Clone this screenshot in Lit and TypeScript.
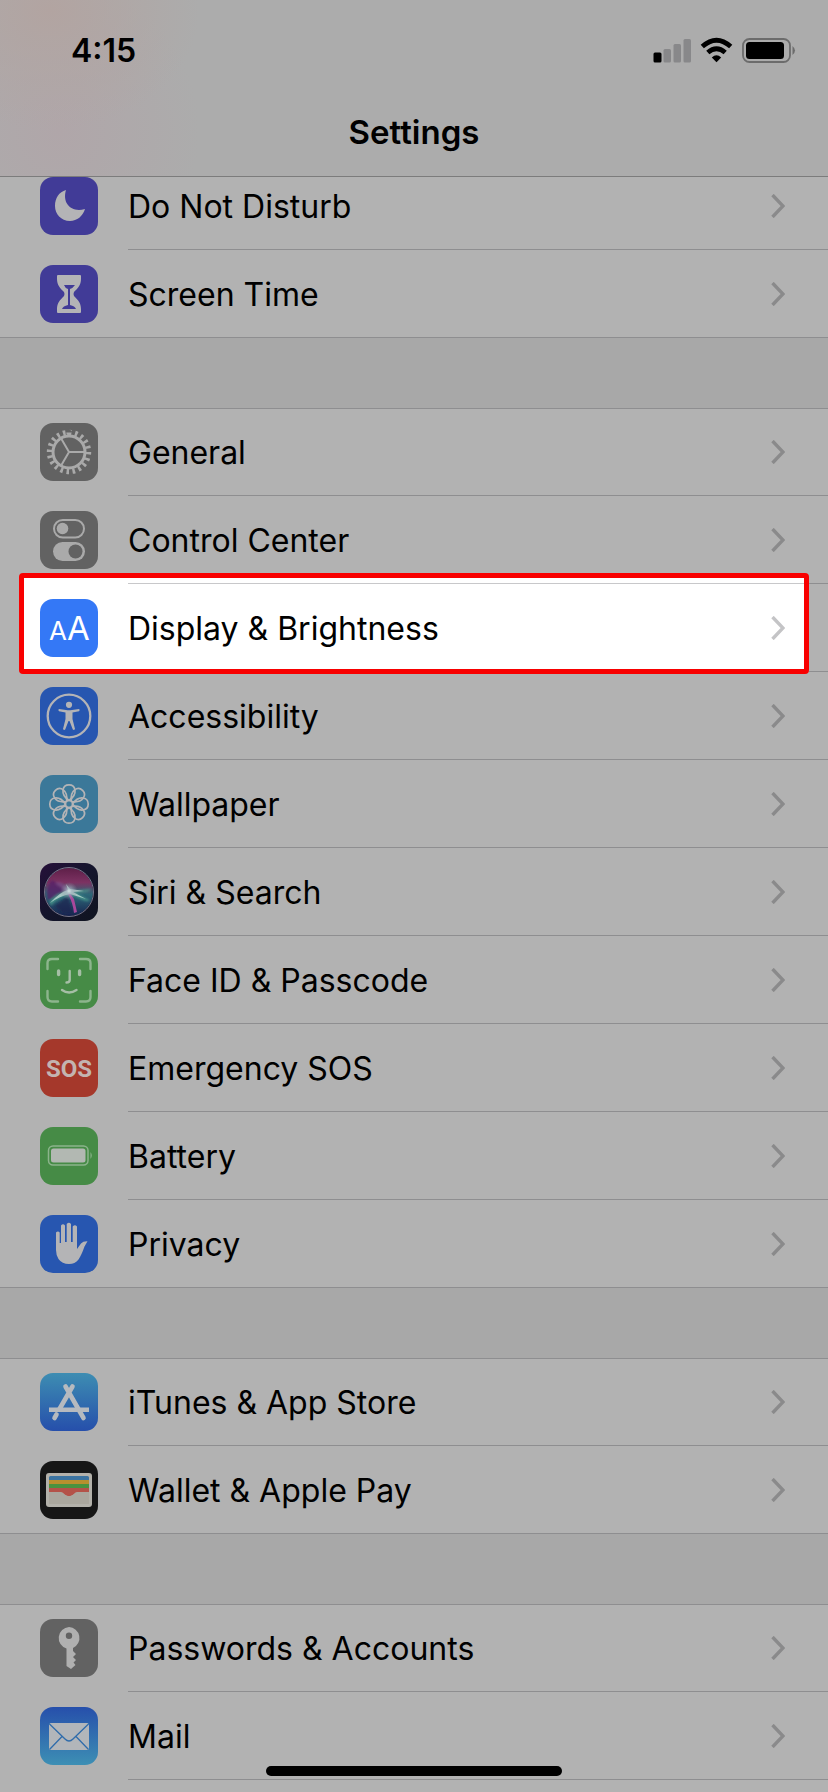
import { LitElement, html, svg, css, nothing, SVGTemplateResult } from "lit";
import { customElement, property } from "lit/decorators.js";
import { classMap } from "lit/directives/class-map.js";

interface Row {
  icon: string;
  label: string;
  highlighted?: boolean;
}

const groups: Row[][] = [
  [
    { icon: "moon", label: "Do Not Disturb" },
    { icon: "hourglass", label: "Screen Time" },
  ],
  [
    { icon: "gear", label: "General" },
    { icon: "toggles", label: "Control Center" },
    { icon: "display", label: "Display & Brightness", highlighted: true },
    { icon: "accessibility", label: "Accessibility" },
    { icon: "wallpaper", label: "Wallpaper" },
    { icon: "siri", label: "Siri & Search" },
    { icon: "face", label: "Face ID & Passcode" },
    { icon: "sos", label: "Emergency SOS" },
    { icon: "battery", label: "Battery" },
    { icon: "hand", label: "Privacy" },
  ],
  [
    { icon: "store", label: "iTunes & App Store" },
    { icon: "wallet", label: "Wallet & Apple Pay" },
  ],
  [
    { icon: "key", label: "Passwords & Accounts" },
    { icon: "mail", label: "Mail" },
  ],
];

const LIGHT = "#b4b4b6";
const BLUE = "#2756b0";
const PURPLE = "#413b97";
const eight = [0, 45, 90, 135, 180, 225, 270, 315];

const glyphs: Record<string, SVGTemplateResult> = {
  moon: svg`
    <rect width="58" height="58" fill=${PURPLE} />
    <path fill=${LIGHT} d="M26 13C22 26 31 36 45 32C43 39 37 44 30 44C21 44 15 37 15 29C15 21 19 15 26 13Z" />`,
  hourglass: svg`
    <rect width="58" height="58" fill=${PURPLE} />
    <path fill=${LIGHT} d="M18 10H40Q41 10 41 11V14C41 20 38 23 34 27Q33 29 34 31C38 35 41 38 41 44V47Q41 48 40 48H18Q17 48 17 47V44C17 38 20 35 24 31Q25 29 24 27C20 23 17 20 17 14V11Q17 10 18 10Z" />
    <path fill=${PURPLE} d="M24 20H35Q33 23 30 24V40Q35 41 36 44H22Q23 41 28 40V24Q25 23 24 20Z" />`,
  gear: svg`
    <rect width="58" height="58" fill="#626262" />
    <g fill="none" stroke="#aaaaaa">
      <circle cx="29" cy="29" r="16" stroke-width="3" />
      <circle cx="29" cy="29" r="19.5" stroke-width="5.4" pathLength="20" stroke-dasharray=".42 .58" />
      <path stroke-width="2" d="M29 29H45M29 29L21 15.200M29 29L21 42.800" />
    </g>`,
  toggles: svg`
    <rect width="58" height="58" fill="#626262" />
    <rect x="14" y="9" width="30" height="17.500" rx="8.750" fill="none" stroke="#aaaaaa" stroke-width="2" />
    <circle cx="22.500" cy="17.500" r="5.800" fill="#aaaaaa" />
    <rect x="13" y="31" width="32" height="19" rx="9.500" fill="#aaaaaa" />
    <circle cx="35.500" cy="40.500" r="7" fill="#626262" />`,
  display: svg`
    <rect width="58" height="58" fill="#3478f6" />
    <text class="glyph" x="9" y="41" font-size="26" fill="#fff">A</text>
    <text class="glyph" x="27" y="41" font-size="33" fill="#fff">A</text>`,
  accessibility: svg`
    <rect width="58" height="58" fill=${BLUE} />
    <circle cx="29" cy="29" r="21.300" fill="none" stroke=${LIGHT} stroke-width="2.300" />
    <circle cx="29" cy="17.800" r="3.100" fill=${LIGHT} />
    <path fill=${LIGHT} d="M19 22L26 23Q29 23.500 32 23L39 22Q40.500 23 39 24.300L32.500 25.500V32L35 42Q34 43.500 32.800 42.500L29.500 34H28.500L25.200 42.500Q24 43.500 23 42L25.500 32V25.500L19 24.300Q17.500 23 19 22Z" />`,
  wallpaper: svg`
    <rect width="58" height="58" fill="#3b7899" />
    <g fill="none" stroke=${LIGHT} stroke-width="1.700">
      ${eight.map(
        (a) => svg`<path d="M29 25.500C24 22 22.500 19 23 15C23.500 11.500 26 9.800 29 9.800S34.500 11.500 35 15C35.500 19 34 22 29 25.500Z" transform="rotate(${a} 29 29)" />`
      )}
      <circle cx="29" cy="29" r="3.600" />
    </g>`,
  siri: svg`
    <defs>
      <linearGradient id="siri-back" x1="0" y1="0" x2="1" y2="1">
        <stop offset="0" stop-color="#26103a" /><stop offset=".5" stop-color="#14152c" /><stop offset="1" stop-color="#10141f" />
      </linearGradient>
      <linearGradient id="siri-orb" x1="0" y1="0" x2="0" y2="1">
        <stop offset="0" stop-color="#5e1f48" /><stop offset=".3" stop-color="#7c3262" />
        <stop offset=".55" stop-color="#2d6878" /><stop offset="1" stop-color="#182450" />
      </linearGradient>
      <radialGradient id="siri-core"><stop offset="0" stop-color="#d8e4e4" /><stop offset=".3" stop-color="#a9b8c4" stop-opacity=".7" /><stop offset="1" stop-color="#888899" stop-opacity="0" /></radialGradient>
      <filter id="siri-soft" x="-20%" y="-20%" width="140%" height="140%"><feGaussianBlur stdDeviation="1" /></filter>
    </defs>
    <rect width="58" height="58" fill="url(#siri-back)" />
    <circle cx="29" cy="29" r="24" fill="url(#siri-orb)" />
    <g filter="url(#siri-soft)">
      <path fill="#552268" opacity=".8" d="M29 28C20 25 14 14 10 19Q5 29 8 37Q18 34 29 28Z" />
      <path fill="#7a4a86" opacity=".7" d="M29 27Q21 16 15 20Q19 25 29 28Z" />
      <path fill="#48a08e" opacity=".7" d="M9 39Q18 28 30 28L51 26Q50 30 36 30L50 37Q47 41 31 31Q20 33 11 43Z" />
      <path fill="#1a2350" opacity=".7" d="M28 33L33 50Q22 52 15 43Z" />
    </g>
    <path fill="#a8489c" d="M29 29L34 36L37 49L34 50Q33 40 28 31Z" />
    <path fill="#b7d3cf" opacity=".85" d="M10 40Q20 29 28 27L26 21L30 26L44 28L33 29L46 36L30 31Q20 33 10 40Z" />
    <circle cx="29" cy="28" r="9" fill="url(#siri-core)" />
    <circle cx="29" cy="29" r="24.500" fill="none" stroke="#77758a" stroke-width="1" />`,
  face: svg`
    <rect width="58" height="58" fill="#468b46" />
    <g fill="none" stroke="#a6bea6" stroke-width="2.400" stroke-linecap="round">
      <path stroke="#8db58d" d="M7.500 18V12Q7.500 8 12 8H18M40 8H46Q50.500 8 50.500 12V18M50.500 40V46Q50.500 50.500 46 50.500H40M18 50.500H12Q7.500 50.500 7.500 46V40" />
      <path stroke-width="3.400" d="M18.600 20V23.500M39.600 20V23.500" />
      <path d="M29.700 20V29Q29.700 31.500 26.500 31.500M22 39Q29 44 36.500 39" />
    </g>`,
  sos: svg`
    <rect width="58" height="58" fill="#a5382b" />
    <text class="sos" x="29" y="38" text-anchor="middle" font-size="24" fill="#c3b4b0">SOS</text>`,
  battery: svg`
    <rect width="58" height="58" fill="#468b46" />
    <rect x="8.500" y="19" width="39.500" height="19" rx="4.500" fill="none" stroke="#8cb48c" stroke-width="1.500" />
    <rect x="11" y="21.500" width="34.500" height="14" rx="2.500" fill="#b2b8b2" />
    <path d="M50.500 25Q53 28.500 50.500 32Z" fill="#8cb48c" />`,
  hand: svg`
    <rect width="58" height="58" fill=${BLUE} />
    <path fill=${LIGHT} d="M16 17.500Q18 15.500 19.700 17.500V28H21V10.500Q23 8 25 10.500V27H26.700V9Q29 6.500 31 9V27H32.700V11.500Q35 9 37 11.500V34L41 28.500Q43 26 47.500 26.200L44.500 31.500Q41.500 40 38.500 44.500Q35 49 29 49Q22 49 18.500 44Q16 40 16 35Z" />`,
  store: svg`
    <defs><linearGradient id="store-back" x1="0" y1="0" x2="0" y2="1"><stop offset="0" stop-color="#3d8db2" /><stop offset="1" stop-color="#264fab" /></linearGradient></defs>
    <rect width="58" height="58" fill="url(#store-back)" />
    <g fill="none" stroke="#b6babf" stroke-width="4.600">
      <path d="M9 36.700H49" />
      <path stroke-linecap="round" d="M32.500 13.500L19.500 36M25.500 13.500L43.500 45M16.500 41.500L14.500 45" />
    </g>`,
  wallet: svg`
    <rect width="58" height="58" fill="#161616" />
    <rect x="6" y="12" width="46" height="34" rx="3" fill="#b3b1aa" />
    <rect x="9" y="15" width="40" height="6" rx="1.500" fill="#3b73a0" />
    <rect x="9" y="19" width="40" height="5" fill="#b8902e" />
    <rect x="9" y="23" width="40" height="5" fill="#4a923f" />
    <path fill="#b45248" d="M9 27H49V31H38Q35 31 33.500 33.500Q29 37 24.500 33.500Q23 31 20 31H9Z" />
    <path fill="#aaa79e" d="M9 31H20Q23 31 24.500 33.500Q29 37 33.500 33.500Q35 31 38 31H49V43H9Z" />`,
  key: svg`
    <rect width="58" height="58" fill="#626262" />
    <path fill="#b0b0b0" fill-rule="evenodd" d="M29 8A11 11 0 0 1 33 29V32L36 35L33 38L36 41L33.500 43.500L35.500 46L31 50L26.500 47V29.500A11 11 0 0 1 29 8ZM29 13.500A3.200 3.200 0 1 0 29 19.900A3.200 3.200 0 1 0 29 13.500Z" />`,
  mail: svg`
    <defs><linearGradient id="mail-back" x1="0" y1="0" x2="0" y2="1"><stop offset="0" stop-color="#264fab" /><stop offset="1" stop-color="#3d8fb4" /></linearGradient></defs>
    <rect width="58" height="58" fill="url(#mail-back)" />
    <rect x="9" y="16" width="40" height="27" rx="1.500" fill="#b2b6ba" />
    <path fill="none" stroke="#2f6cab" stroke-width="1.300" d="M9 16.500L25 32Q29 36 33 32L49 16.500M9.500 42.500L22 29.500M48.500 42.500L36 29.500" />`,
};

@customElement("app-icon")
class AppIcon extends LitElement {
  @property() name = "";

  static styles = css`
    :host {
      display: block;
      width: 58px;
      height: 58px;
      flex: none;
      border-radius: 13px;
      overflow: hidden;
    }
    svg {
      display: block;
      width: 100%;
      height: 100%;
    }
    .glyph {
      font-family: Inter, sans-serif;
      font-weight: 400;
    }
    .sos {
      font-family: "Liberation Sans Narrow", Roboto, sans-serif;
      font-weight: 700;
    }
  `;

  render() {
    return html`<svg viewBox="0 0 58 58" aria-hidden="true">${glyphs[this.name] ?? nothing}</svg>`;
  }
}

@customElement("settings-row")
class SettingsRow extends LitElement {
  @property() icon = "";
  @property() label = "";
  @property({ type: Boolean }) highlighted = false;
  @property({ type: Boolean }) divided = false;

  static styles = css`
    :host {
      display: block;
    }
    .row {
      position: relative;
      display: flex;
      align-items: center;
      gap: 30px;
      height: 88px;
      padding-left: 40px;
      color: #000;
      text-decoration: none;
    }
    .body {
      flex: 1;
      display: flex;
      align-items: center;
      justify-content: space-between;
      box-sizing: border-box;
      height: 100%;
      padding-right: 43px;
      border-bottom: 1px solid transparent;
    }
    .divided .body {
      border-bottom-color: #8e8e90;
    }
    .label {
      padding-top: 2px;
      font-size: 32px;
      line-height: 40px;
      white-space: nowrap;
    }
    .chevron {
      display: block;
      width: 14px;
      height: 24px;
      fill: none;
      stroke: #8a8a8b;
      stroke-width: 3.4;
    }
    .highlighted {
      z-index: 1;
    }
    .highlighted .body {
      border-bottom-color: transparent;
    }
    .highlighted::after {
      content: "";
      position: absolute;
      right: 0;
      bottom: 0;
      width: 19px;
      height: 1px;
      background: #8e8e90;
    }
    .highlighted .chevron {
      stroke: #c4c4c6;
    }
    .frame {
      position: absolute;
      inset: -11px 19px -2px 19px;
      z-index: -1;
      border: 5px solid #f80000;
      border-radius: 4px;
      background: #fff;
    }
    .frame::before {
      content: "";
      position: absolute;
      top: 5px;
      left: 104px;
      right: 0;
      height: 1px;
      background: #c8c8ca;
    }
  `;

  render() {
    return html`
      <a class=${classMap({ row: true, divided: this.divided, highlighted: this.highlighted })} href="#">
        ${this.highlighted ? html`<span class="frame"></span>` : nothing}
        <app-icon name=${this.icon}></app-icon>
        <span class="body">
          <span class="label">${this.label}</span>
          <svg class="chevron" viewBox="0 0 14 24" aria-hidden="true"><path d="M1.500 1L12 12L1.500 23" /></svg>
        </span>
      </a>
    `;
  }
}

@customElement("app-root")
class AppRoot extends LitElement {
  static styles = css`
    :host {
      display: flex;
      flex-direction: column;
      height: 100vh;
      overflow: hidden;
      position: relative;
      background: #a8a8a8;
      color: #000;
      font-family: Inter, sans-serif;
    }
    .top {
      position: relative;
      z-index: 2;
      flex: none;
      border-bottom: 1px solid #7c7c7c;
      background:
        radial-gradient(ellipse 150px 120px at 50px 10px, #b2a4a1 0%, #b2a4a100 100%),
        radial-gradient(ellipse 140px 150px at 60px 130px, #b0a6a9 0%, #b0a6a900 100%),
        #acacac;
    }
    .status {
      display: flex;
      align-items: center;
      justify-content: space-between;
      height: 100px;
      padding: 0 32px 0 71px;
    }
    .time {
      padding-top: 2px;
      font-size: 32px;
      line-height: 40px;
      font-weight: 600;
    }
    .signals {
      display: block;
      width: 143px;
      height: 26px;
    }
    .title {
      margin: 0;
      padding: 12px 0 24px;
      font-size: 33px;
      line-height: 40px;
      font-weight: 600;
      text-align: center;
    }
    .list {
      flex: 1;
      display: flex;
      flex-direction: column;
      gap: 70px;
      margin-top: -15px;
    }
    .group {
      flex: none;
      margin: 0;
      padding: 0;
      list-style: none;
      background: #b2b2b2;
      box-shadow: inset 0 1px #8e8e90, inset 0 -1px #8e8e90;
    }
    .group:last-child {
      flex: 1 0 auto;
      box-shadow: inset 0 1px #8e8e90;
    }
    .home {
      position: absolute;
      z-index: 3;
      left: 50%;
      bottom: 16px;
      width: 296px;
      height: 10px;
      margin-left: -148px;
      border-radius: 5px;
      background: #000;
    }
  `;

  render() {
    return html`
      <header class="top">
        <div class="status">
          <span class="time">4:15</span>
          <svg class="signals" viewBox="0 0 143 26" aria-hidden="true">
            <rect x="0.500" y="15.500" width="8" height="10" rx="1.500" />
            <g fill="#88888a">
              <rect x="10.500" y="12" width="7.500" height="13.500" rx="1.500" />
              <rect x="20.500" y="7" width="7.500" height="18.500" rx="1.500" />
              <rect x="30.500" y="2" width="7.500" height="23.500" rx="1.500" />
            </g>
            <g fill="none" stroke="#000">
              <path stroke-width="4.800" d="M49.300 9.500Q63.500 -3.200 77.700 9.500" />
              <path stroke-width="4.800" d="M54.800 15.500Q63.500 8 72.200 15.500" />
            </g>
            <path d="M58.800 20.500Q63.500 16 68.200 20.500L63.500 25.300Z" />
            <rect x="90" y="2" width="47" height="23" rx="6.500" fill="none" stroke="#6c6c6c" stroke-width="1.800" />
            <rect x="93" y="5" width="38" height="17" rx="3.500" />
            <path fill="#6c6c6c" d="M139.500 9Q144.500 13.500 139.500 18Z" />
          </svg>
        </div>
        <h1 class="title">Settings</h1>
      </header>
      <main class="list">
        ${groups.map(
          (rows, g) => html`
            <ul class="group">
              ${rows.map(
                (row, i) => html`
                  <li>
                    <settings-row
                      icon=${row.icon}
                      label=${row.label}
                      ?highlighted=${row.highlighted}
                      ?divided=${i < rows.length - 1 || g === groups.length - 1}
                    ></settings-row>
                  </li>
                `
              )}
            </ul>
          `
        )}
      </main>
      <div class="home"></div>
    `;
  }
}
